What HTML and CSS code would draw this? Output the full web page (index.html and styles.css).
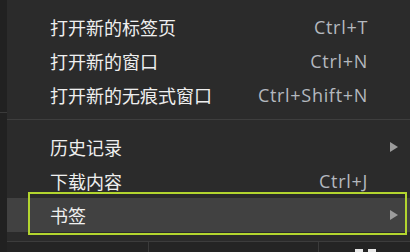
FILE: index.html
```html
<!DOCTYPE html>
<html lang="zh-CN">
<head>
<meta charset="utf-8">
<title>菜单</title>
<link rel="stylesheet" href="styles.css">
</head>
<body>
<div class="screen">
  <div class="strip"><div class="strip-line"></div></div>
  <div class="main">
    <div class="menu">
      <div class="item"><span class="label">打开新的标签页</span><span class="key">Ctrl+T</span><span class="tail"></span></div>
      <div class="item"><span class="label">打开新的窗口</span><span class="key">Ctrl+N</span><span class="tail"></span></div>
      <div class="item"><span class="label">打开新的无痕式窗口</span><span class="key">Ctrl+Shift+N</span><span class="tail"></span></div>
      <div class="sep"></div>
      <div class="item"><span class="label">历史记录</span><span class="tail"><i class="arrow"></i></span></div>
      <div class="item"><span class="label">下载内容</span><span class="key">Ctrl+J</span><span class="tail"></span></div>
      <div class="item active"><span class="label">书签</span><span class="tail"><i class="arrow"></i></span><span class="focus-ring"></span></div>
    </div>
    <div class="bottombar">
      <div class="cell c1"></div>
      <div class="cell c2"></div>
      <div class="cell c3"><span class="sq"></span><span class="sq"></span></div>
    </div>
  </div>
</div>
</body>
</html>
```

FILE: styles.css
```css
html, body {
  margin: 0;
  padding: 0;
  background: #202020;
}
.screen {
  width: 410px;
  height: 252px;
  display: flex;
  overflow: hidden;
}
.strip {
  width: 7px;
  flex: none;
  background: #212121;
  padding-top: 112px;
  box-sizing: border-box;
}
.strip-line {
  height: 1px;
  background: #3a3a3a;
}
.main {
  flex: 1;
  display: flex;
  flex-direction: column;
}
.menu {
  background: #2b2b2b;
  padding: 10px 0 9px;
  font-family: "Noto Sans CJK SC", "Noto Sans", sans-serif;
  color: #efefef;
}
.item {
  position: relative;
  height: 34px;
  display: flex;
  align-items: center;
  padding-left: 43px;
  font-size: 18px;
}
.label {
  flex: 1;
  white-space: nowrap;
}
.key {
  font-family: "Open Sans", "Noto Sans", sans-serif;
  font-size: 18px;
  letter-spacing: 0.7px;
  color: #b4b8bf;
  white-space: nowrap;
}
.tail {
  width: 42px;
  flex: none;
  display: flex;
  justify-content: flex-end;
  padding-right: 12px;
  box-sizing: border-box;
}
.arrow {
  display: block;
  width: 0;
  height: 0;
  border-left: 8px solid #9c9c9c;
  border-top: 5.5px solid transparent;
  border-bottom: 5.5px solid transparent;
}
.sep {
  height: 1px;
  background: #3e3e3e;
  margin: 7px 0 10px;
}
.item.active {
  background: #414141;
}
.focus-ring {
  position: absolute;
  left: 21px;
  right: 3px;
  top: -6px;
  bottom: -3px;
  border: 2px solid #b3d52f;
}
.bottombar {
  flex: 1;
  border-top: 1px solid #3c3c3c;
  background: #242424;
  display: flex;
}
.cell {
  border-right: 1px solid #3a3a3a;
}
.c1 { width: 141px; }
.c2 { width: 169px; }
.c3 {
  flex: 1;
  border-right: none;
  display: flex;
  gap: 5px;
  padding: 7px 0 0 36px;
}
.sq {
  width: 8px;
  height: 8px;
  background: #e8e8e8;
}
```
